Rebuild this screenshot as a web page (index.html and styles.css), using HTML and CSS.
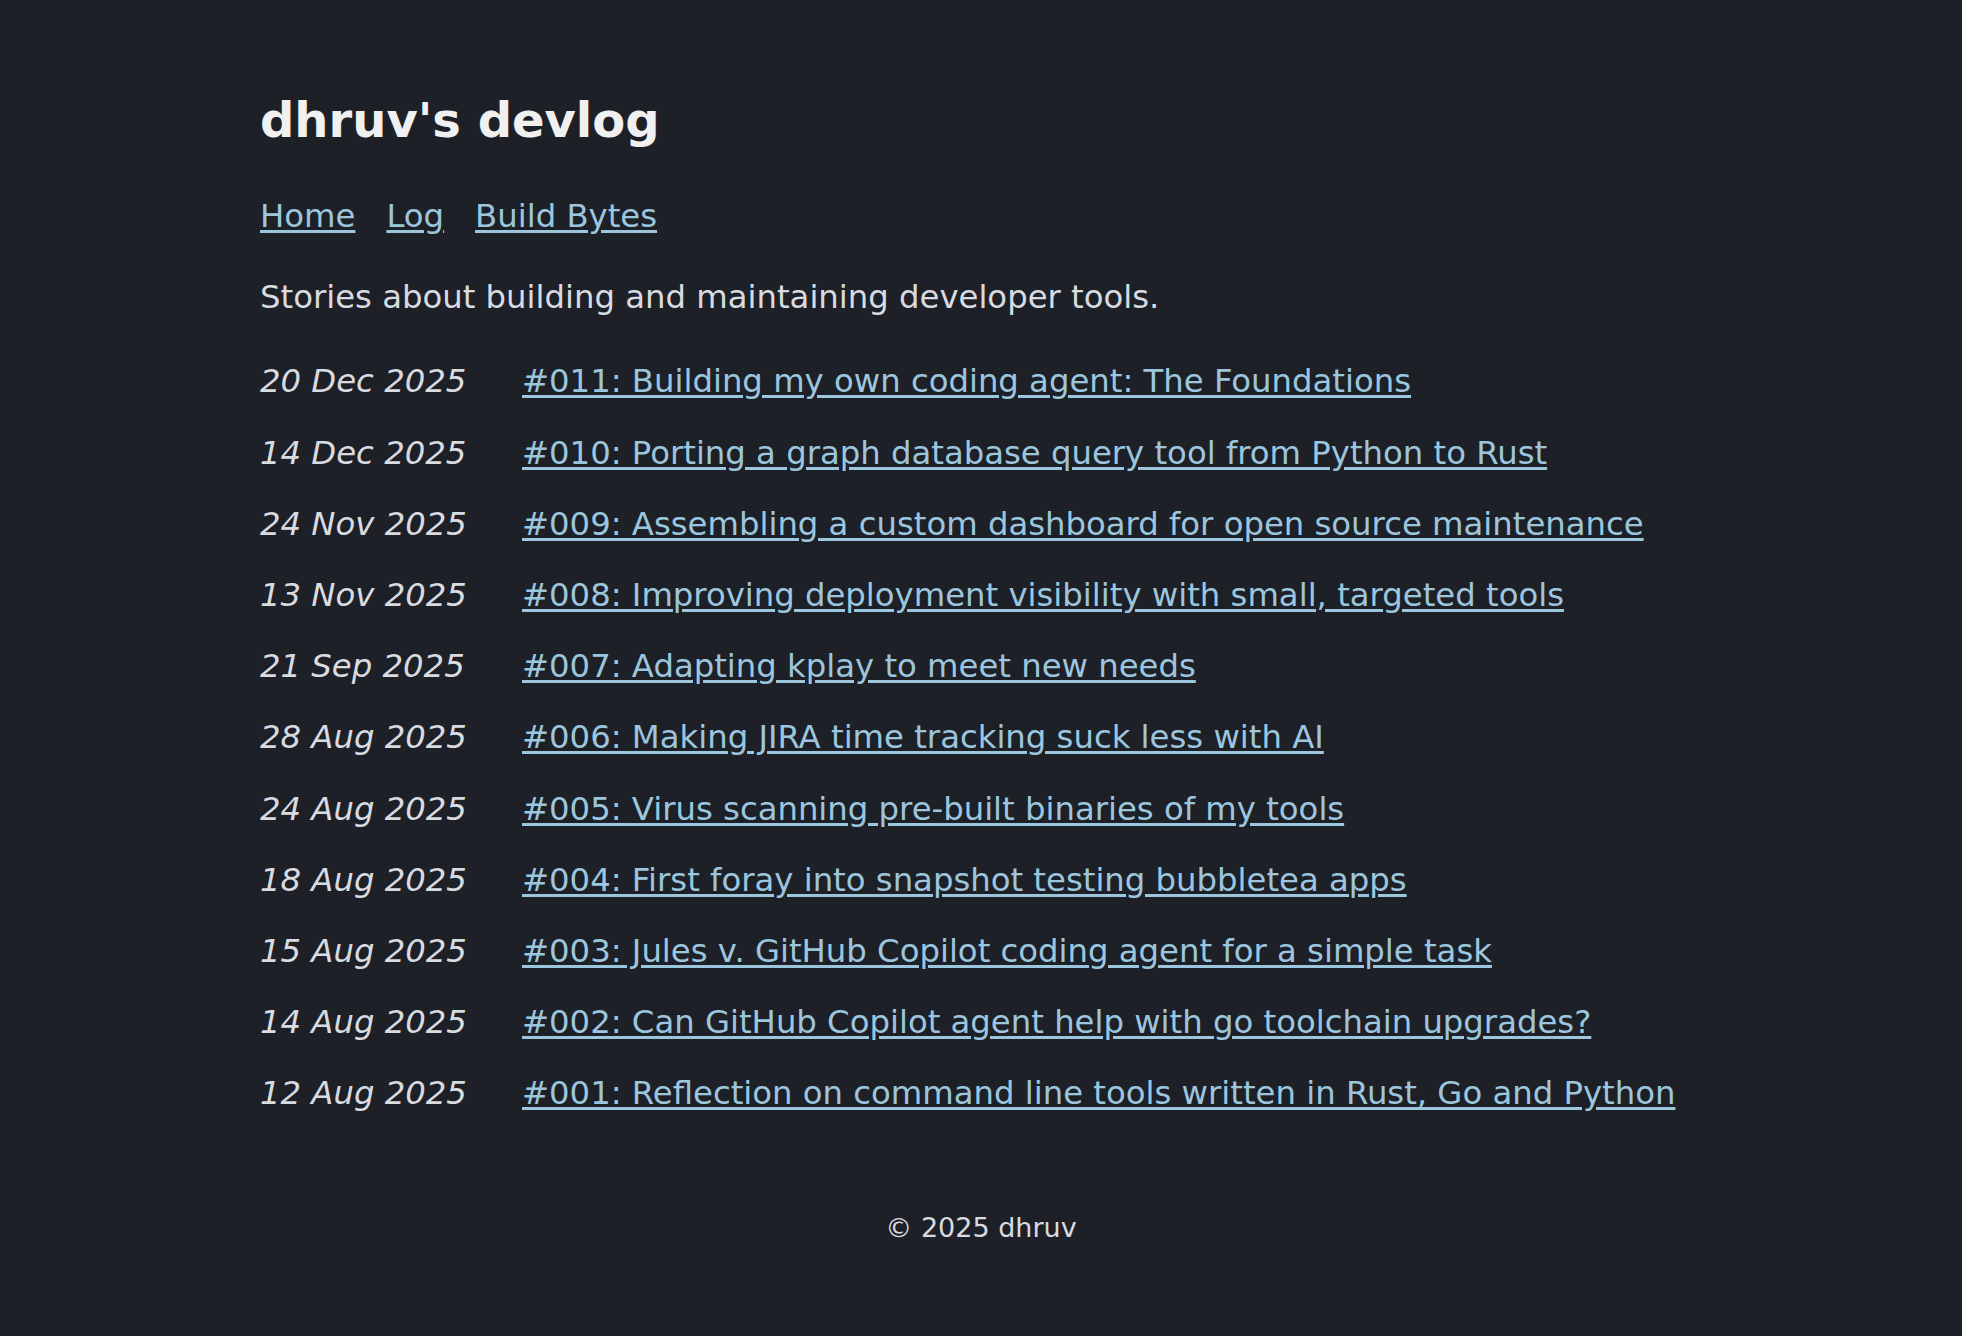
FILE: index.html
```html
<!DOCTYPE html>
<html lang="en">
<head>
<meta charset="utf-8">
<title>dhruv's devlog</title>
<link rel="stylesheet" href="styles.css">
</head>
<body>
<div class="page">
  <header class="header">
    <h1 class="title">dhruv's devlog</h1>
    <nav class="nav">
      <a href="#">Home</a>
      <a href="#">Log</a>
      <a href="#">Build Bytes</a>
    </nav>
  </header>
  <main>
    <p class="tagline">Stories about building and maintaining developer tools.</p>
    <ul class="posts">
      <li class="post"><span class="date">20 Dec 2025</span><a href="#">#011: Building my own coding agent: The Foundations</a></li>
      <li class="post"><span class="date">14 Dec 2025</span><a href="#">#010: Porting a graph database query tool from Python to Rust</a></li>
      <li class="post"><span class="date">24 Nov 2025</span><a href="#">#009: Assembling a custom dashboard for open source maintenance</a></li>
      <li class="post"><span class="date">13 Nov 2025</span><a href="#">#008: Improving deployment visibility with small, targeted tools</a></li>
      <li class="post"><span class="date">21 Sep 2025</span><a href="#">#007: Adapting kplay to meet new needs</a></li>
      <li class="post"><span class="date">28 Aug 2025</span><a href="#">#006: Making JIRA time tracking suck less with AI</a></li>
      <li class="post"><span class="date">24 Aug 2025</span><a href="#">#005: Virus scanning pre-built binaries of my tools</a></li>
      <li class="post"><span class="date">18 Aug 2025</span><a href="#">#004: First foray into snapshot testing bubbletea apps</a></li>
      <li class="post"><span class="date">15 Aug 2025</span><a href="#">#003: Jules v. GitHub Copilot coding agent for a simple task</a></li>
      <li class="post"><span class="date">14 Aug 2025</span><a href="#">#002: Can GitHub Copilot agent help with go toolchain upgrades?</a></li>
      <li class="post"><span class="date">12 Aug 2025</span><a href="#">#001: Reflection on command line tools written in Rust, Go and Python</a></li>
    </ul>
  </main>
  <footer class="footer">© 2025 dhruv</footer>
</div>
</body>
</html>
```
FILE: styles.css
```css
html, body {
  margin: 0;
  padding: 0;
  background: #1e2028;
}
body {
  font-family: "DejaVu Sans", Verdana, sans-serif;
  font-size: 32.3px;
  line-height: 48px;
  color: #d8dbe0;
}
.page {
  padding: 92px 260px 80px;
}
.title {
  margin: 0;
  font-size: 48px;
  line-height: 1.2;
  font-weight: bold;
  color: #f0f0f0;
}
.nav {
  margin-top: 42.5px;
  display: flex;
  gap: 31px;
}
a {
  color: #9cc6de;
  text-decoration: underline;
  text-underline-offset: 3px;
}
.tagline {
  margin: 33px 0 0;
}
.posts {
  list-style: none;
  margin: 36.3px 0 0;
  padding: 0;
  display: flex;
  flex-direction: column;
  gap: 23.2px;
}
.post {
  display: grid;
  grid-template-columns: 262px 1fr;
}
.date {
  font-style: italic;
  color: #d8dbe0;
}
.footer {
  margin-top: 87px;
  text-align: center;
  font-size: 27px;
  color: #d8dbe0;
}
```
